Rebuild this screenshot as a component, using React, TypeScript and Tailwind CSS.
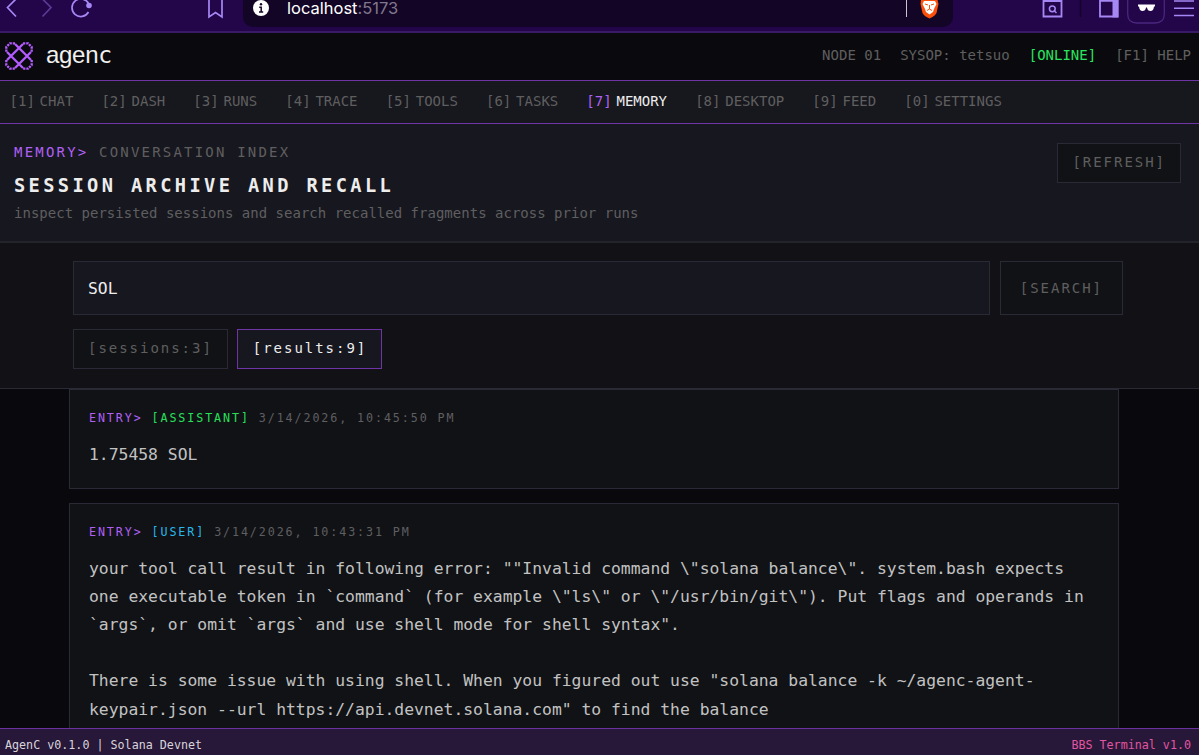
import clsx from "clsx";

const tabs = [
  { key: "1", label: "CHAT" },
  { key: "2", label: "DASH" },
  { key: "3", label: "RUNS" },
  { key: "4", label: "TRACE" },
  { key: "5", label: "TOOLS" },
  { key: "6", label: "TASKS" },
  { key: "7", label: "MEMORY" },
  { key: "8", label: "DESKTOP" },
  { key: "9", label: "FEED" },
  { key: "0", label: "SETTINGS" },
];

const entries = [
  {
    role: "ASSISTANT",
    time: "3/14/2026, 10:45:50 PM",
    text: "1.75458 SOL",
  },
  {
    role: "USER",
    time: "3/14/2026, 10:43:31 PM",
    text: `your tool call result in following error: ""Invalid command \\"solana balance\\". system.bash expects one executable token in \`command\` (for example \\"ls\\" or \\"/usr/bin/git\\"). Put flags and operands in \`args\`, or omit \`args\` and use shell mode for shell syntax".

There is some issue with using shell. When you figured out use "solana balance -k ~/agenc-agent-keypair.json --url https://api.devnet.solana.com" to find the balance`,
  },
];

function BrowserBar() {
  return (
    <div className="flex h-[33px] shrink-0 items-start border-b-2 border-[#381a66] bg-[#23054a] text-[#a688f5]">
      <svg width="243" height="31" fill="none" stroke="currentColor" strokeWidth="1.7">
        <path d="M16 -1 L7.5 7.5 L16 16.5" />
        <path d="M42.5 -1 L51 7.5 L42.5 16.5" stroke="#5b3a94" />
        <path d="M88.5 12 A8.8 8.8 0 1 1 88.8 4" />
        <circle cx="89" cy="5.5" r="2.8" fill="currentColor" stroke="none" />
        <path d="M209 -2 V17 L215.5 12.5 L222 17 V-2" />
      </svg>
      <div className="flex h-[27px] w-[710px] items-start rounded-b-[10px] bg-[#130526]">
        <svg width="36" height="20" className="ml-2">
          <circle cx="10" cy="8" r="8" fill="#fff" />
          <circle cx="10" cy="4.3" r="1.2" fill="#130526" />
          <path d="M8.2 7.2 H10.2 V12 M8 12 H12.2" stroke="#130526" strokeWidth="1.5" fill="none" />
        </svg>
        <div className="font-['Inter'] text-[16.5px] leading-4 text-white">
          localhost<span className="text-[#81778d]">:5173</span>
        </div>
        <svg width="50" height="20" className="ml-auto">
          <path d="M3.5 0 V17" stroke="#c9c5cf" />
          <path d="M18 0 H34.5 L35.5 4 L33.5 13 Q32 16 26.5 18.5 Q21 16 19.5 13 L17.5 4 Z" fill="#fb4f0c" />
          <path d="M21 1 H32 L33.5 4 L31 9 L30 12 L26.5 14.5 L23 12 L22 9 L19.5 4 Z" fill="#fff" />
          <path d="M22 4 L25 5 M31 4 L28 5 M26.5 5 V9 M24 10.5 L26.5 9 L29 10.5" stroke="#fb4f0c" fill="none" />
        </svg>
      </div>
      <svg width="246" height="31" fill="none" stroke="currentColor" strokeWidth="1.8">
        <path d="M90.5 -2 V16.5 H108.5 V-2 M90.5 1 H108.5" />
        <circle cx="99.3" cy="8.8" r="2.9" strokeWidth="1.5" />
        <path d="M101.5 11 L103.5 13" strokeWidth="1.5" />
        <path d="M127.5 0 V17" stroke="#130526" strokeWidth="1.5" />
        <path d="M147 -2 V16.5 H164.5 V-2 M147 0.8 H160" />
        <path d="M159.5 0 H165.5 V17.4 H159.5 Z" fill="currentColor" stroke="none" />
        <path d="M174.7 -5 V14 Q174.7 23 184 23 H202 Q211.3 23 211.3 14 V-5" stroke="#4a267d" strokeWidth="1.3" />
        <path d="M185 4.5 H202 V6.5 H201 Q200.5 11 197.5 11 Q194.5 11 194 7.5 H193 Q192.5 11 189.5 11 Q186.5 11 186 6.5 H185 Z" fill="#fff" stroke="none" />
        <path d="M221 1 H241 M221 8.2 H241 M221 15.5 H241" strokeWidth="1.5" />
      </svg>
    </div>
  );
}

function Logo() {
  return (
    <div className="flex items-center pb-[2px]">
      <svg width="28" height="28" viewBox="0 0 28 28" fill="none" stroke="#b45cff" strokeWidth="2.3">
        <path d="M2 10 L18 26 M10 2 L26 18 M18 2 L2 18 M26 10 L10 26" />
        {/* dotted petals in the corners */}
        <path
          d="M10 1.3 H5 L1.3 5 V10 M18 1.3 H23 L26.7 5 V10 M1.3 18 V23 L5 26.7 H10 M26.7 18 V23 L23 26.7 H18"
          strokeDasharray="2.3 0.9"
        />
      </svg>
      <span className="-mt-[2px] ml-[13px] font-['Liberation_Sans'] text-[24px] leading-7 tracking-[-0.3px] text-[#f0f0ee]">
        agen<span className="font-['DejaVu_Sans_Mono'] text-[23px]">c</span>
      </span>
    </div>
  );
}

function Header() {
  return (
    <header className="flex h-[48px] shrink-0 items-center justify-between border-b border-[#6f35a6] bg-[#0a0a0e] pr-2 pl-[5px] text-[14px] text-[#5f5f5f]">
      <Logo />
      <div className="flex gap-[19px] pb-[2px]">
        <span>NODE 01</span>
        <span>SYSOP: tetsuo</span>
        <span className="text-[#2be35f]">[ONLINE]</span>
        <span>[F1] HELP</span>
      </div>
    </header>
  );
}

function EntryCard({ role, time, text }: (typeof entries)[number]) {
  return (
    <article className="border border-[#2a2a36] bg-[#111216] px-[19px] pt-[18px] pb-[19px]">
      <div className="text-[11.7px] leading-5 tracking-[1.9px] text-[#5f5f61]">
        <span className="text-[#b060f5]">ENTRY&gt;</span>{" "}
        <span className={role === "USER" ? "text-[#28b8ec]" : "text-[#27e05a]"}>
          [{role}]
        </span>{" "}
        <span>{time}</span>
      </div>
      <p className="mt-[13px] text-[16.36px] leading-[28.1px] whitespace-pre-wrap text-[#c2c2c2]">
        {text}
      </p>
    </article>
  );
}

function App() {
  const active = "7";

  return (
    <div className="flex h-[755px] w-[1199px] flex-col overflow-hidden bg-[#09090d] font-['DejaVu_Sans_Mono',monospace]">
      <BrowserBar />
      <Header />
      <nav className="flex h-[43px] shrink-0 items-center gap-[28.1px] border-b border-[#6f35a6] bg-[#17171e] pb-px pl-[9.5px] text-[14px] text-[#5f5f5f]">
        {tabs.map((tab) => (
          <div key={tab.key} className="flex gap-[4.8px]">
            <span className={clsx(tab.key === active && "text-[#b060f5]")}>[{tab.key}]</span>
            <span className={clsx(tab.key === active && "text-[#ededed]")}>{tab.label}</span>
          </div>
        ))}
      </nav>
      <section className="flex h-[119px] shrink-0 items-start justify-between border-b-2 border-[#23232c] bg-[#17171f] pr-[18px] pl-[14px]">
        <div className="pt-[18px]">
          <div className="text-[14px] leading-5 tracking-[2.2px] text-[#5f5f5f]">
            <span className="text-[#b060f5]">MEMORY&gt;</span> CONVERSATION INDEX
          </div>
          <h1 className="mt-[10px] text-[18.7px] leading-7 font-bold tracking-[3.37px] text-[#ededed]">
            SESSION ARCHIVE AND RECALL
          </h1>
          <p className="mt-[3px] text-[14px] leading-5 tracking-[0.01px] text-[#5f5f5f]">
            inspect persisted sessions and search recalled fragments across prior runs
          </p>
        </div>
        <button className="mt-[19px] h-10 border border-[#2a2a36] bg-[#111216] px-[14px] pb-[2px] text-[14px] tracking-[1.97px] text-[#5f5f5f]">
          [REFRESH]
        </button>
      </section>
      <section className="h-[146px] shrink-0 border-b border-[#2a2a36] bg-[#111116] pt-[18px] pr-[76px] pl-[73px]">
        <div className="flex gap-[10px]">
          <input
            defaultValue="SOL"
            className="h-[54px] min-w-0 flex-1 border border-[#2a2a36] bg-[#17171f] px-[14px] text-[16.36px] text-[#ededed] outline-none"
          />
          <button className="h-[54px] border border-[#2a2a36] bg-[#111216] px-[19px] text-[14px] tracking-[1.97px] text-[#5f5f5f]">
            [SEARCH]
          </button>
        </div>
        <div className="mt-[14px] flex gap-[9px] text-[14px] tracking-[1.97px]">
          <button className="h-10 border border-[#2a2a36] bg-[#111216] px-[14px] pb-[2px] text-[#5f5f5f]">
            [sessions:3]
          </button>
          <button className="h-10 border border-[#6f35a6] bg-[#17171f] pr-[14px] pb-[2px] pl-[15px] text-[#ededed]">
            [results:9]
          </button>
        </div>
      </section>
      <main className="flex min-h-0 flex-1 flex-col gap-[14px] overflow-hidden pr-20 pl-[69px]">
        {entries.map((entry) => (
          <EntryCard key={entry.time} {...entry} />
        ))}
      </main>
      <footer className="flex h-[27px] shrink-0 items-center justify-between border-t border-[#6b329f] bg-[#271738] pt-[6px] pr-2 pl-[5px] text-[11.7px] leading-5 text-[#d8d4dc]">
        <span>AgenC v0.1.0 | Solana Devnet</span>
        <span className="text-[#e255a1]">BBS Terminal v1.0</span>
      </footer>
    </div>
  );
}

export default App;
